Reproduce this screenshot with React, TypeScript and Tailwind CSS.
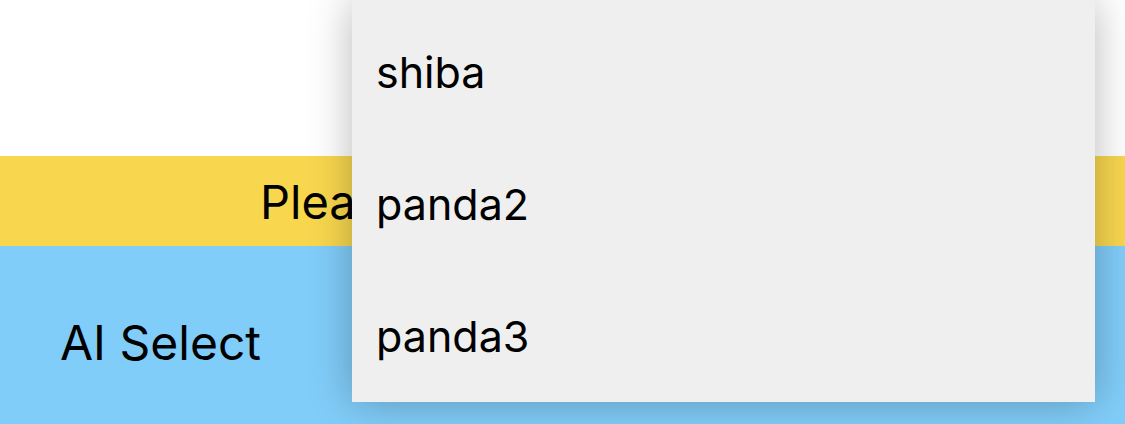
import React from "react";

export default function App() {
  const items = ["shiba", "panda2", "panda3"];
  return (
    <div
      className="relative w-[1125px] h-[424px] overflow-hidden bg-white"
      style={{ fontFamily: "Inter, 'Noto Sans', sans-serif" }}
    >
      <div className="h-[156px] bg-white" />
      <div className="h-[90px] bg-[#f8d74e] flex items-center pl-[260px] text-[47px] text-black leading-none">
        Please select an AI
      </div>
      <div className="h-[200px] bg-[#81cdf9] flex items-start pl-[60px] pt-[73px] text-[48px] text-black leading-none">
        AI Select
      </div>
      <div className="absolute left-[352px] top-0 w-[743px] h-[402px] bg-[#efefef] pt-[6px] shadow-[0_0_40px_rgba(0,0,0,0.28)]">
        {items.map((it) => (
          <div
            key={it}
            className="h-[132px] flex items-center pl-[24px] text-[43px] text-black leading-none"
          >
            {it}
          </div>
        ))}
      </div>
    </div>
  );
}
